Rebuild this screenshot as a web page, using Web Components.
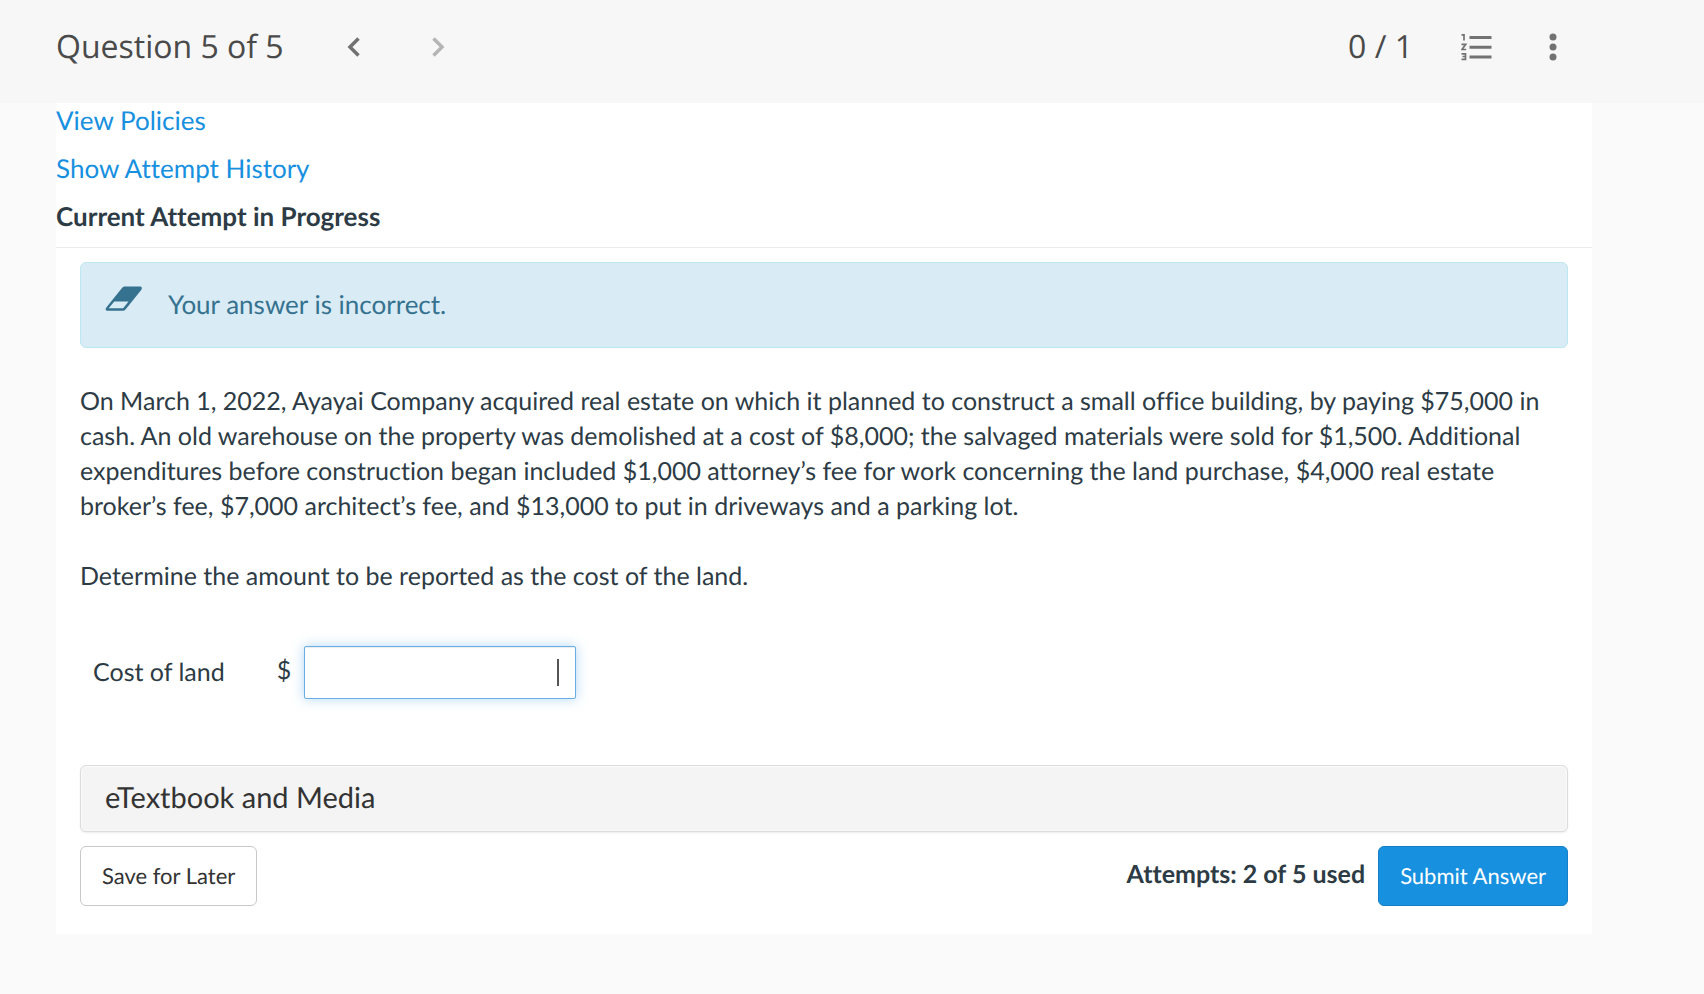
<!DOCTYPE html>
<html lang="en">
<head>
<meta charset="utf-8">
<meta name="viewport" content="width=device-width, initial-scale=1">
<title>Question 5 of 5</title>
<style>
  :root {
    --brand-blue: #1890e0;
    --text: #2d3b45;
    --info: #35728f;
    --gutter-left: 56px;
    --gutter-right: 112px;
  }
  body {
    margin: 0;
    background: #fafafa;
    color: var(--text);
    font-family: Lato, sans-serif;
    font-size: 25px;
    font-variant-ligatures: none;
    line-height: 35px;
    text-rendering: geometricPrecision;
  }
  p {
    margin: 0 0 35px;
  }
</style>
</head>
<body>
  <question-header score="0 / 1">Question 5 of 5</question-header>
  <question-panel>
    <attempt-links slot="intro"></attempt-links>
    <answer-alert>Your answer is incorrect.</answer-alert>
    <question-text>
      <p>On March 1, 2022, Ayayai Company acquired real estate on which it planned to construct a small office building, by paying $75,000 in cash. An old warehouse on the property was demolished at a cost of $8,000; the salvaged materials were sold for $1,500. Additional expenditures before construction began included $1,000 attorney’s fee for work concerning the land purchase, $4,000 real estate broker’s fee, $7,000 architect’s fee, and $13,000 to put in driveways and a parking lot.</p>
      <p>Determine the amount to be reported as the cost of the land.</p>
    </question-text>
    <money-field label="Cost of land"></money-field>
    <media-bar>eTextbook and Media</media-bar>
    <answer-actions>Attempts: 2 of 5 used</answer-actions>
  </question-panel>

<script>
class QuestionHeader extends HTMLElement {
  constructor() {
    super();
    this.attachShadow({ mode: 'open' });
    this.shadowRoot.innerHTML = `
      <style>
        :host {
          display: block;
          background: #f7f7f7;
          color: #4a4a4a;
          font-family: 'Open Sans', 'Noto Sans', sans-serif;
        }
        header {
          display: flex;
          align-items: center;
          box-sizing: border-box;
          min-height: 103px;
          padding: 0 var(--gutter-right) 10px var(--gutter-left);
        }
        h1, .score {
          margin: 0;
          font-size: 32px;
          font-weight: 400;
          line-height: 44px;
        }
        nav {
          display: flex;
          gap: 36px;
          margin-left: 46px;
        }
        button {
          display: grid;
          place-items: center;
          width: 48px;
          height: 48px;
          padding: 0;
          border: 0;
          background: none;
          color: #727272;
        }
        button:disabled {
          color: #b5b5b5;
        }
        .tools {
          display: flex;
          align-items: center;
          margin-left: auto;
          gap: 28px;
          padding-right: 15px;
        }
        .score {
          padding-right: 12px;
        }
      </style>
      <header>
        <h1><slot></slot></h1>
        <nav aria-label="Questions">
          <button type="button" aria-label="Previous question">
            <svg width="16" height="24" viewBox="0 0 16 24" fill="none" stroke="currentColor" stroke-width="3.500"><path d="M12.500 3.500 4 12l8.500 8.500"/></svg>
          </button>
          <button type="button" aria-label="Next question" disabled>
            <svg width="16" height="24" viewBox="0 0 16 24" fill="none" stroke="currentColor" stroke-width="3.500"><path d="M3.500 3.500 12 12l-8.500 8.500"/></svg>
          </button>
        </nav>
        <div class="tools">
          <span class="score"></span>
          <button type="button" aria-label="Question list">
            <svg width="32" height="28" viewBox="0 0 32 28" fill="none" stroke="currentColor">
              <path stroke-width="3" d="M8.500 4.500h22M8.500 14.200h22M8.500 24h22"/>
              <path stroke-width="1.700" d="M.5 1.800H3V7.500M.5 11.300h4.200L1 16.500h4.200M.5 20.800h4v5.500h-4M1.500 23.500h3"/>
            </svg>
          </button>
          <button type="button" aria-label="More options">
            <svg width="8" height="28" viewBox="0 0 8 28" fill="currentColor"><circle cx="4" cy="4" r="3.500"/><circle cx="4" cy="14" r="3.500"/><circle cx="4" cy="24" r="3.500"/></svg>
          </button>
        </div>
      </header>
    `;
  }

  connectedCallback() {
    this.shadowRoot.querySelector('.score').textContent = this.getAttribute('score') || '';
  }
}

class QuestionPanel extends HTMLElement {
  constructor() {
    super();
    this.attachShadow({ mode: 'open' });
    this.shadowRoot.innerHTML = `
      <style>
        :host {
          display: block;
          margin: 0 var(--gutter-right) 60px var(--gutter-left);
          background: white;
        }
        .intro {
          border-bottom: 1px solid #ebebeb;
          padding-bottom: 13px;
        }
        .content {
          padding: 14px 24px 28px;
        }
      </style>
      <main>
        <div class="intro"><slot name="intro"></slot></div>
        <div class="content"><slot></slot></div>
      </main>
    `;
  }
}

class AttemptLinks extends HTMLElement {
  constructor() {
    super();
    this.attachShadow({ mode: 'open' });
    this.shadowRoot.innerHTML = `
      <style>
        :host {
          display: flex;
          flex-direction: column;
          align-items: flex-start;
          gap: 13px;
          font-size: 26px;
        }
        a {
          color: var(--brand-blue);
          text-decoration: none;
        }
        h2 {
          margin: 0;
          font-size: 26px;
          font-weight: 700;
        }
      </style>
      <a href="#policies">View Policies</a>
      <a href="#history">Show Attempt History</a>
      <h2>Current Attempt in Progress</h2>
    `;
  }
}

class AnswerAlert extends HTMLElement {
  constructor() {
    super();
    this.attachShadow({ mode: 'open' });
    this.shadowRoot.innerHTML = `
      <style>
        :host {
          display: block;
        }
        .alert {
          display: flex;
          gap: 25px;
          padding: 23px 24px 25px;
          border: 1px solid #bce8f1;
          border-radius: 6px;
          background: #d9ebf5;
          color: var(--info);
          font-size: 26px;
        }
        .message {
          padding-top: 1px;
        }
      </style>
      <div class="alert" role="alert">
        <svg width="38" height="26" viewBox="0 0 38 26" aria-hidden="true">
          <path d="M20 .5h15c2 0 2.500 2 1.200 3.500L20.500 23.500c-.8.900-1.600 1.300-2.600 1.300H2.500C.5 24.800 0 23 1.300 21.500L17.200 1.800C18 .9 19 .5 20 .5z" fill="currentColor"/>
          <path d="M9.300 15.500h14.200l-5.300 6.800H3.700z" fill="#d9ebf5"/>
        </svg>
        <span class="message"><slot></slot></span>
      </div>
    `;
  }
}

class QuestionText extends HTMLElement {
  constructor() {
    super();
    this.attachShadow({ mode: 'open' });
    this.shadowRoot.innerHTML = `
      <style>
        :host {
          display: block;
          padding-top: 36px;
        }
      </style>
      <slot></slot>
    `;
  }
}

class MoneyField extends HTMLElement {
  constructor() {
    super();
    this.attachShadow({ mode: 'open' });
    this.shadowRoot.innerHTML = `
      <style>
        :host {
          display: flex;
          align-items: center;
          padding: 17px 13px 66px;
        }
        label {
          margin-right: 52px;
        }
        .currency {
          padding-bottom: 4px;
          margin-right: 13px;
        }
        input {
          box-sizing: border-box;
          width: 272px;
          height: 53px;
          padding: 8px 16px;
          border: 1px solid #66afe9;
          border-radius: 2px;
          outline: 0;
          /* text cursor at the right edge */
          background: linear-gradient(#555, #555) right 16px center / 2px 27px no-repeat white;
          box-shadow: 0 0 12px rgba(102, 175, 233, 0.5), inset 0 1px 1px rgba(0, 0, 0, 0.08);
          color: inherit;
          font: inherit;
          text-align: right;
        }
      </style>
      <label for="amount"></label>
      <span class="currency">$</span>
      <input id="amount" type="text" inputmode="numeric">
    `;
  }

  connectedCallback() {
    this.shadowRoot.querySelector('label').textContent = this.getAttribute('label') || '';
  }
}

class MediaBar extends HTMLElement {
  constructor() {
    super();
    this.attachShadow({ mode: 'open' });
    this.shadowRoot.innerHTML = `
      <style>
        :host {
          display: block;
        }
        button {
          display: block;
          width: 100%;
          padding: 14px 24px 16px;
          border: 1px solid #dcdcdc;
          border-radius: 6px;
          background: #f4f4f4;
          box-shadow: 0 1px 2px rgba(0, 0, 0, 0.08), inset 0 0 0 1px #fafafa;
          color: #333;
          font: inherit;
          font-size: 29px;
          line-height: 35px;
          text-align: left;
          text-rendering: inherit;
        }
      </style>
      <button type="button"><slot></slot></button>
    `;
  }
}

class AnswerActions extends HTMLElement {
  constructor() {
    super();
    this.attachShadow({ mode: 'open' });
    this.shadowRoot.innerHTML = `
      <style>
        :host {
          display: flex;
          align-items: center;
          padding-top: 14px;
        }
        button {
          height: 60px;
          padding: 0 21px 2px;
          border: 1px solid #c8c8c8;
          border-radius: 6px;
          background: white;
          color: #333;
          font: inherit;
          font-size: 22px;
          text-rendering: inherit;
        }
        .submit {
          border-color: #1580c8;
          background: var(--brand-blue);
          color: white;
        }
        .attempts {
          margin: 0 13px 4px auto;
          font-weight: 700;
        }
      </style>
      <button type="button">Save for Later</button>
      <span class="attempts"><slot></slot></span>
      <button type="submit" class="submit">Submit Answer</button>
    `;
  }
}

customElements.define('question-header', QuestionHeader);
customElements.define('question-panel', QuestionPanel);
customElements.define('attempt-links', AttemptLinks);
customElements.define('answer-alert', AnswerAlert);
customElements.define('question-text', QuestionText);
customElements.define('money-field', MoneyField);
customElements.define('media-bar', MediaBar);
customElements.define('answer-actions', AnswerActions);
</script>
</body>
</html>
